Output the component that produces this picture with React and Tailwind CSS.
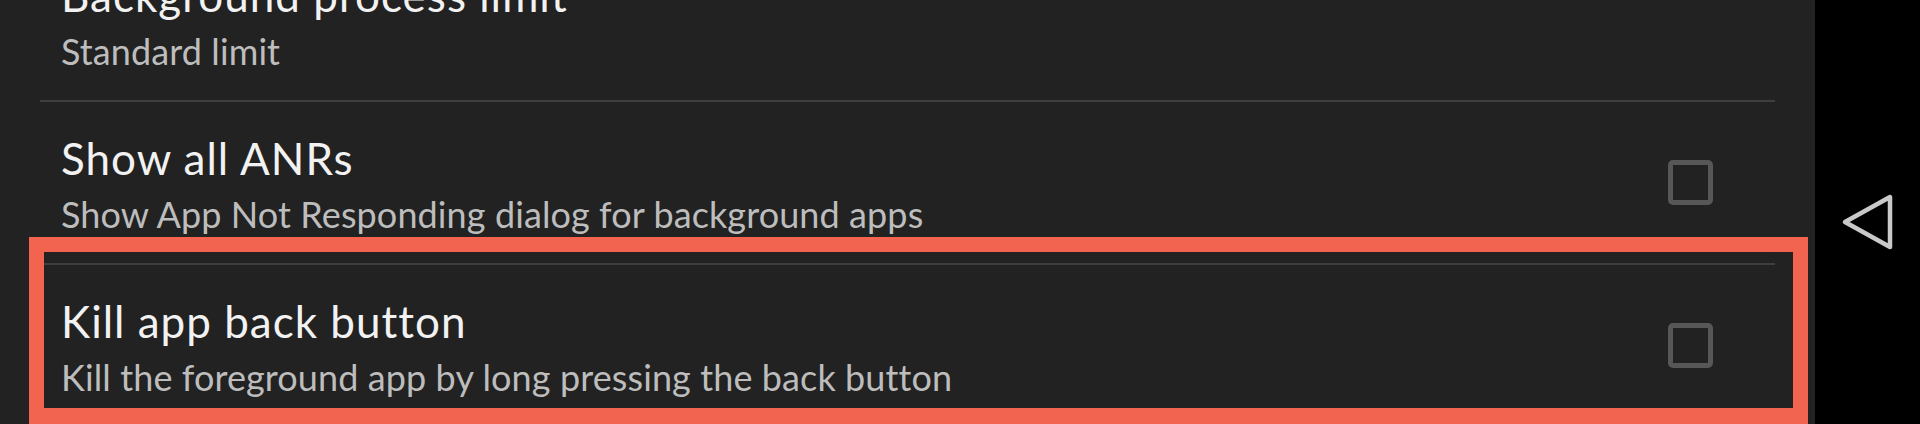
import React from 'react';

const rows = [
  { title: 'Background process limit', summary: 'Standard limit', checkbox: false },
  { title: 'Show all ANRs', summary: 'Show App Not Responding dialog for background apps', checkbox: true },
  { title: 'Kill app back button', summary: 'Kill the foreground app by long pressing the back button', checkbox: true },
];

const Checkbox = () => (
  <div className="w-[45px] h-[45px] shrink-0 rounded-[5px] border-[5px] border-[#575757]" />
);

const PrefRow = ({ title, summary, checkbox }) => (
  <div className="mx-[40px] h-[163px] border-t-2 border-[#3e3e3e] flex items-center pl-[21px] pr-[62px]">
    <div className="flex-1 self-start pt-[31px]">
      <div className="text-[44px] leading-[50px] tracking-[1px] text-[#f2f2f2]">{title}</div>
      <div className="mt-[10px] text-[36px] leading-[42px] tracking-[0.1px] text-[#bdbdbd]">{summary}</div>
    </div>
    {checkbox && <Checkbox />}
  </div>
);

export default function App() {
  return (
    <div
      className="relative flex w-[1920px] h-[424px] overflow-hidden bg-black"
      style={{ fontFamily: 'Lato, "Open Sans", sans-serif' }}
    >
      <div className="w-[1815px] h-full bg-[#222222] overflow-hidden">
        <div className="-mt-[63px] flex flex-col">
          {rows.map((r) => (
            <PrefRow key={r.title} {...r} />
          ))}
        </div>
      </div>

      {/* nav bar */}
      <div className="flex-1 flex items-center justify-center pt-[20px]">
        <svg width="54" height="58" viewBox="0 0 54 58" fill="none">
          <path
            d="M4 29 L49 4 L49 54 Z"
            stroke="#c9c9c9"
            strokeWidth="4.5"
            strokeLinejoin="round"
          />
        </svg>
      </div>

      {/* highlight annotation */}
      <div className="absolute left-[29px] top-[237px] w-[1779px] h-[187px] border-[15px] border-b-[16px] border-[#f36450]" />
    </div>
  );
}
